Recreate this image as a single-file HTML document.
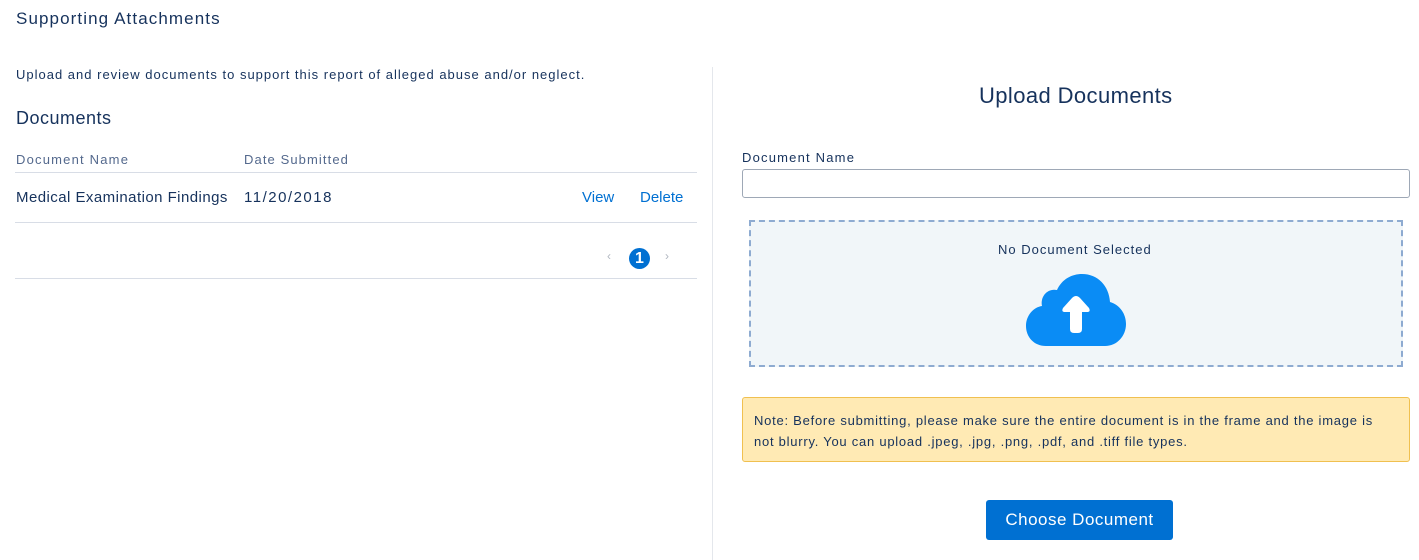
<!DOCTYPE html>
<html><head><style>
*{box-sizing:border-box;margin:0;padding:0}
body{width:1419px;height:560px;background:#fff;font-family:"Liberation Sans",sans-serif;color:#16325c;position:relative;overflow:hidden}
.a{position:absolute;white-space:nowrap}
.line{position:absolute;height:1px;background:#d8dde6}
</style></head><body>
<div class="a" style="left:16px;top:9px;font-size:17px;letter-spacing:1.1px">Supporting Attachments</div>
<div class="a" style="left:16px;top:67px;font-size:13px;letter-spacing:1px">Upload and review documents to support this report of alleged abuse and/or neglect.</div>
<div class="a" style="left:16px;top:108px;font-size:18px;letter-spacing:0.5px">Documents</div>
<div class="a" style="left:16px;top:152px;font-size:13px;color:#54698d;letter-spacing:1.2px">Document Name</div>
<div class="a" style="left:244px;top:152px;font-size:13px;color:#54698d;letter-spacing:1.1px">Date Submitted</div>
<div class="line" style="left:15px;top:172px;width:682px"></div>
<div class="a" style="left:16px;top:189px;font-size:15px;letter-spacing:0.45px">Medical Examination Findings</div>
<div class="a" style="left:244px;top:189px;font-size:15px;letter-spacing:1.5px">11/20/2018</div>
<div class="a" style="left:582px;top:189px;font-size:15px;color:#0070d2">View</div>
<div class="a" style="left:640px;top:189px;font-size:15px;color:#0070d2">Delete</div>
<div class="line" style="left:15px;top:222px;width:682px"></div>
<div class="a" style="left:607px;top:249px;font-size:12px;color:#b0b6c0">‹</div>
<div class="a" style="left:629px;top:248px;width:21px;height:21px;border-radius:50%;background:#0070d2;color:#fff;font-size:16px;font-weight:bold;text-align:center;line-height:21px">1</div>
<div class="a" style="left:665px;top:249px;font-size:12px;color:#b0b6c0">›</div>
<div class="line" style="left:15px;top:278px;width:682px"></div>
<div style="position:absolute;left:712px;top:67px;width:1px;height:493px;background:#e4e7ec"></div>
<div class="a" style="left:979px;top:83px;font-size:22px;letter-spacing:0.4px">Upload Documents</div>
<div class="a" style="left:742px;top:150px;font-size:13px;letter-spacing:1.2px">Document Name</div>
<div style="position:absolute;left:742px;top:169px;width:668px;height:29px;border:1px solid #9ea8b6;border-radius:3px"></div>
<div style="position:absolute;left:749px;top:220px;width:654px;height:147px;background:#f1f6f9;border:2px dashed #8eabd1"></div>
<div class="a" style="left:998px;top:242px;font-size:13px;letter-spacing:1px">No Document Selected</div>
<svg style="position:absolute;left:1024px;top:272px" width="104" height="76" viewBox="0 0 104 76">
<path fill="#0a8cf5" d="M22 74 C10 74 2 65 2 54 C2 43 10 35 18 34 C16 24 24 16 33 18 C38 7 48 2 58 2 C74 2 85 14 86 30 C96 33 102 42 102 52 C102 64 93 74 81 74 Z"/>
<path fill="#fff" d="M52 24 Q54 24 56 26 L65 36 Q67 40 63 40 L58 40 L58 57 Q58 61 54 61 L50 61 Q46 61 46 57 L46 40 L41 40 Q37 40 39 36 L48 26 Q50 24 52 24 Z"/>
</svg>
<div style="position:absolute;left:742px;top:397px;width:668px;height:65px;background:#ffeab4;border:1px solid #f0c050;border-radius:3px"></div>
<div class="a" style="left:754px;top:410px;font-size:13px;line-height:21px;white-space:normal;width:640px;letter-spacing:0.75px">Note: Before submitting, please make sure the entire document is in the frame and the image is not blurry. You can upload .jpeg, .jpg, .png, .pdf, and .tiff file types.</div>
<div style="position:absolute;left:986px;top:500px;width:187px;height:40px;background:#0070d2;border-radius:3px;color:#fff;font-size:17px;text-align:center;line-height:40px;letter-spacing:0.5px">Choose Document</div>
</body></html>
